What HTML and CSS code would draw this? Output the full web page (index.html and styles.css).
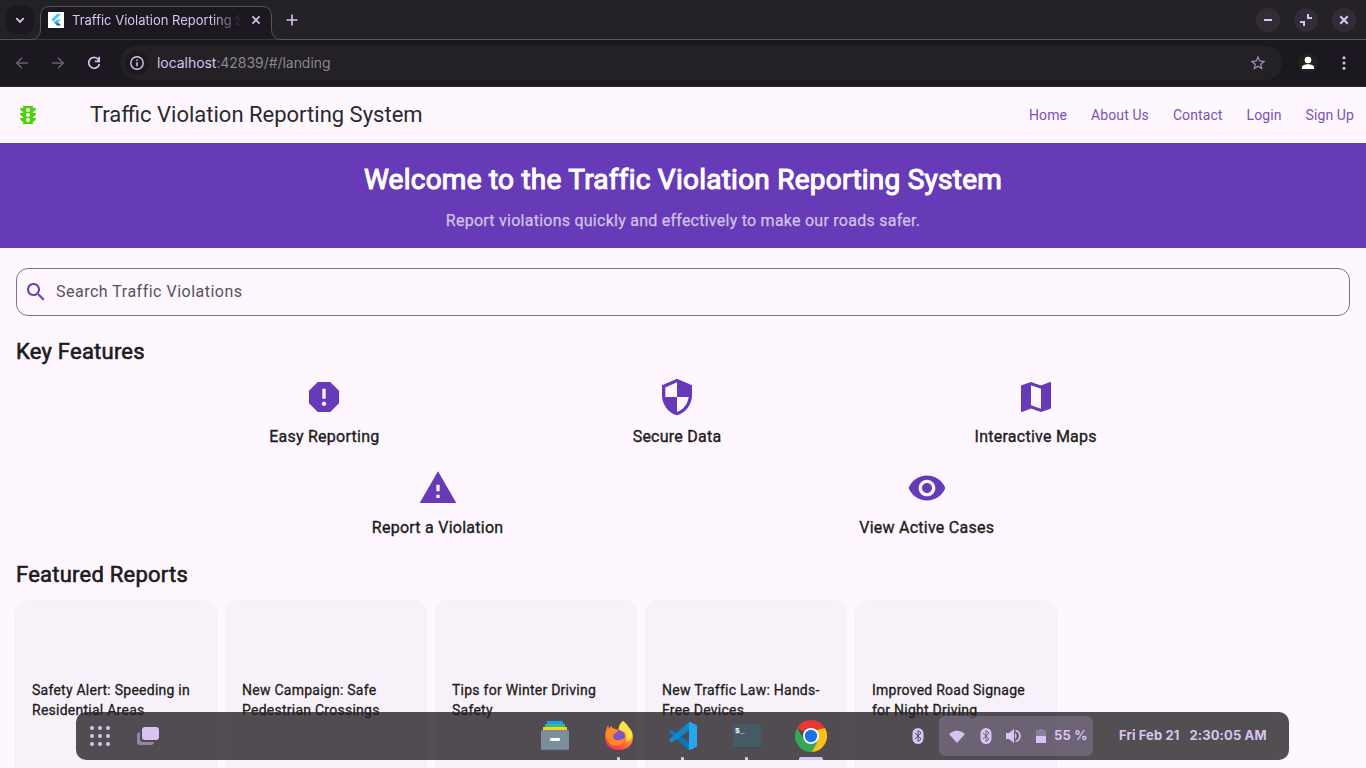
FILE: index.html
```html
<!DOCTYPE html>
<html lang="en">
<head>
<meta charset="utf-8">
<title>Traffic Violation Reporting System</title>
<link rel="stylesheet" href="styles.css">
</head>
<body>
<div class="screen">
  <header class="tabstrip">
    <button class="tab-search"><svg width="12" height="12" viewBox="0 0 12 12"><path d="M2.3 4.2 6 7.9l3.7-3.7" fill="none" stroke="currentColor" stroke-width="1.8"/></svg></button>
    <svg class="tab-outline" width="291" height="40" viewBox="0 0 291 40"><path d="M0 46V45Q.5 39.5 6.500 39.500H31Q40.500 39 40.500 29V16Q40.500 6.500 50 6.500H262Q271.500 6.500 271.500 16V29Q271.500 39.500 282 39.500H291V40H0Z" fill="#1b181f" stroke="#58545c"/></svg>
    <div class="tab">
      <svg class="favicon" width="16" height="16" viewBox="0 0 16 16"><path fill="#fff" d="M0 0h16v16H0z"/><path fill="#47c5fb" d="M9 2h4L5.300 9.700l-2-2z"/><path fill="#47c5fb" d="M9 7.400h4l-3 3-2-2z"/><path fill="#16569e" d="m8 12.300 2-1.900 3 3H9z"/><path fill="#15a5ed" d="m6 10.400 2-2 2 2-2 2z"/></svg>
      <span class="tab-title">Traffic Violation Reporting S</span>
      <svg class="tab-close" width="10" height="10" viewBox="0 0 10 10"><path d="m1.400 1.400 7.200 7.200m0-7.200L1.400 8.600" stroke="currentColor" stroke-width="1.600"/></svg>
    </div>
    <svg class="new-tab" width="12" height="12" viewBox="0 0 12 12"><path d="M6 .5v11M.5 6h11" stroke="currentColor" stroke-width="1.600"/></svg>
    <div class="window-buttons">
      <span class="win-btn"><svg width="24" height="24"><path d="M8 12h8" stroke="currentColor" stroke-width="2"/></svg></span>
      <span class="win-btn"><svg width="24" height="24"><path d="M14 6v4h4M6 14h4v4" fill="none" stroke="currentColor" stroke-width="2"/></svg></span>
      <span class="win-btn"><svg width="24" height="24"><path d="m8.300 8.300 7.400 7.400m0-7.400-7.400 7.400" stroke="currentColor" stroke-width="2.200"/></svg></span>
    </div>
  </header>
  <div class="toolbar">
    <svg class="nav-icon dim" width="16" height="16" viewBox="0 0 16 16"><path d="M14 8H3m5-5.300L2.700 8 8 13.300" fill="none" stroke="currentColor" stroke-width="1.500"/></svg>
    <svg class="nav-icon dim" width="16" height="16" viewBox="0 0 16 16"><path d="M2 8h11M8 2.700 13.300 8 8 13.300" fill="none" stroke="currentColor" stroke-width="1.500"/></svg>
    <svg class="nav-icon" width="16" height="16" viewBox="0 0 16 16"><path d="M12.900 5.300A5.400 5.400 0 1 0 13.400 9M13.200 1.800v4.500H8.800" fill="none" stroke="currentColor" stroke-width="1.700"/></svg>
    <div class="omnibox">
      <span class="site-info"><svg width="14" height="14" viewBox="0 0 14 14"><circle cx="7" cy="7" r="6.200" fill="none" stroke="currentColor" stroke-width="1.400"/><path d="M7 6.200v4M7 3.500v1.600" stroke="currentColor" stroke-width="1.500"/></svg></span>
      <span class="url"><b>localhost</b>:42839/#/landing</span>
      <svg class="star" width="18" height="18" viewBox="0 0 24 24"><path fill="currentColor" d="M22 9.240l-7.190-.62L12 2 9.190 8.630 2 9.240l5.460 4.730L5.820 21 12 17.270 18.180 21l-1.630-7.030L22 9.240zM12 15.400l-3.760 2.270 1-4.280-3.320-2.880 4.380-.38L12 6.100l1.710 4.040 4.380.38-3.320 2.880 1 4.280L12 15.400z"/></svg>
    </div>
    <span class="profile"><svg width="20" height="20"><circle cx="10" cy="7" r="3.300" fill="#fff"/><path d="M4 16v-1.500C4 12.500 7 11.300 10 11.300s6 1.200 6 3.200V16z" fill="#fff"/></svg></span>
    <svg class="kebab" width="4" height="14"><circle cx="2" cy="1.800" r="1.500"/><circle cx="2" cy="7" r="1.500"/><circle cx="2" cy="12.200" r="1.500"/></svg>
  </div>

  <main class="page">
    <div class="appbar">
      <svg class="logo" width="24" height="24" viewBox="0 0 24 24"><path fill="#4bd30b" fill-rule="evenodd" d="M20 10h-3V8.860c1.720-.45 3-2 3-3.860h-3V4c0-.55-.45-1-1-1H8c-.55 0-1 .45-1 1v1H4c0 1.860 1.280 3.410 3 3.860V10H4c0 1.860 1.280 3.410 3 3.860V15H4c0 1.860 1.280 3.410 3 3.860V20c0 .55.45 1 1 1h8c.55 0 1-.45 1-1v-1.140c1.720-.45 3-2 3-3.860h-3v-1.140c1.720-.45 3-2 3-3.860zm-8 9c-1.110 0-2-.9-2-2s.890-2 2-2c1.100 0 2 .9 2 2s-.89 2-2 2zm0-5c-1.110 0-2-.9-2-2s.890-2 2-2c1.100 0 2 .9 2 2s-.89 2-2 2zm0-5c-1.110 0-2-.9-2-2 0-1.110.890-2 2-2 1.100 0 2 .890 2 2 0 1.100-.89 2-2 2z"/></svg>
      <h1 class="app-title">Traffic Violation Reporting System</h1>
      <nav class="links"><a>Home</a><a>About Us</a><a>Contact</a><a>Login</a><a>Sign Up</a></nav>
    </div>
    <section class="hero">
      <h2 class="hero-title">Welcome to the Traffic Violation Reporting System</h2>
      <p class="hero-text">Report violations quickly and effectively to make our roads safer.</p>
    </section>
    <div class="content">
      <div class="search">
        <svg width="24" height="24" viewBox="0 0 24 24"><path fill="#673ab7" d="M15.500 14h-.79l-.28-.27C15.410 12.590 16 11.110 16 9.500 16 5.910 13.090 3 9.500 3S3 5.910 3 9.500 5.910 16 9.500 16c1.610 0 3.090-.59 4.230-1.570l.27.28v.79l5 4.990L20.490 19l-4.990-5zm-6 0C7.010 14 5 11.990 5 9.500S7.010 5 9.500 5 14 7.010 14 9.500 11.990 14 9.500 14z"/></svg>
        <span class="search-hint">Search Traffic Violations</span>
      </div>
      <h3 class="section-title">Key Features</h3>
      <div class="features">
        <div class="feature"><svg viewBox="0 0 24 24"><path d="M15.730 3H8.270L3 8.270v7.460L8.270 21h7.460L21 15.730V8.270L15.730 3zM12 17.300c-.72 0-1.300-.58-1.300-1.300s.58-1.300 1.300-1.300 1.300.58 1.300 1.300-.58 1.300-1.300 1.300zm1-4.300h-2V7h2v6z"/></svg><span>Easy Reporting</span></div>
        <div class="feature"><svg viewBox="0 0 24 24"><path d="M12 1 3 5v6c0 5.550 3.840 10.740 9 12 5.160-1.260 9-6.450 9-12V5l-9-4zm0 10.990h7c-.53 4.120-3.280 7.790-7 8.940V12H5V6.300l7-3.110v8.800z"/></svg><span>Secure Data</span></div>
        <div class="feature"><svg viewBox="0 0 24 24"><path d="m20.500 3-.16.030L15 5.100 9 3 3.360 4.900c-.21.070-.36.250-.36.480V20.500c0 .280.220.5.5.5l.16-.030L9 18.900l6 2.100 5.640-1.900c.21-.070.36-.250.36-.480V3.500c0-.280-.22-.5-.5-.5zM15 19l-6-2.110V5l6 2.110V19z"/></svg><span>Interactive Maps</span></div>
      </div>
      <div class="features">
        <div class="feature"><svg viewBox="0 0 24 24"><path d="M1 21h22L12 2 1 21zm12-3h-2v-2h2v2zm0-4h-2v-4h2v4z"/></svg><span>Report a Violation</span></div>
        <div class="feature"><svg viewBox="0 0 24 24"><path d="M12 4.500C7 4.500 2.730 7.610 1 12c1.730 4.390 6 7.500 11 7.500s9.270-3.110 11-7.500c-1.730-4.390-6-7.500-11-7.500zM12 17c-2.760 0-5-2.240-5-5s2.240-5 5-5 5 2.240 5 5-2.240 5-5 5zm0-8c-1.660 0-3 1.340-3 3s1.340 3 3 3 3-1.340 3-3-1.340-3-3-3z"/></svg><span>View Active Cases</span></div>
      </div>
      <h3 class="section-title reports-title">Featured Reports</h3>
      <div class="reports">
        <article class="report">Safety Alert: Speeding in<br>Residential Areas</article>
        <article class="report">New Campaign: Safe<br>Pedestrian Crossings</article>
        <article class="report">Tips for Winter Driving<br>Safety</article>
        <article class="report">New Traffic Law: Hands-<br>Free Devices</article>
        <article class="report">Improved Road Signage<br>for Night Driving</article>
      </div>
    </div>
  </main>

  <div class="dock">
    <div class="dock-left">
      <svg width="20" height="20"><g fill="#d9c3f2"><circle cx="2" cy="2" r="2"/><circle cx="10" cy="2" r="2"/><circle cx="18" cy="2" r="2"/><circle cx="2" cy="10" r="2"/><circle cx="10" cy="10" r="2"/><circle cx="18" cy="10" r="2"/><circle cx="2" cy="18" r="2"/><circle cx="10" cy="18" r="2"/><circle cx="18" cy="18" r="2"/></g></svg>
      <svg width="22" height="18"><path d="M3 5v7q0 3 3 3h11q-.5 3-3 3H3q-3 0-3-3V8q0-2.500 3-3z" fill="#94879f"/><rect x="5" width="17" height="13" rx="3" fill="#d9c3f2"/></svg>
    </div>
    <div class="apps">
      <div class="app"><svg width="32" height="32" viewBox="0 0 32 32"><path fill="#1c9cf0" d="M8 1h16v3H8z"/><path fill="#2ec27e" d="M6 4h20v3H6z"/><path fill="#ffcf20" d="M4 7h24v3H4z"/><rect x="2" y="10" width="28" height="20" rx="1.500" fill="#78909c"/><path d="M3 29.700h26" stroke="#607680" stroke-width=".6"/><rect x="11" y="18" width="10" height="3" rx="1" fill="#fff"/></svg></div>
      <div class="app"><svg width="32" height="32" viewBox="0 0 32 32"><defs><linearGradient id="fox" x1=".8" y1="0" x2=".2" y2="1"><stop offset="0" stop-color="#ffdf30"/><stop offset=".45" stop-color="#ff922b"/><stop offset=".85" stop-color="#ff3b50"/></linearGradient></defs><path fill="url(#fox)" d="M20 1c4 3 5 5 6 7 3 2 4 6 4 9 0 8-6 13-14 13S2 25 2 17c0-4 1-7 3-12l1 4 2-3c1 1 2 3 4 3l3 1c1-4 2-7 5-9z"/><circle cx="16" cy="16" r="6" fill="#8053c8"/><path fill="#ff8a20" d="M3 11c3-3 6-2 9-2 1 1 3 1 3 2-1 2-3 2-4 3-2 2-1 5 2 6 4 1 6-1 9-2-1 7-8 9-13 7-5-3-7-8-6-14z"/><path fill="#ffe046" d="M20 1c3 4 10 8 9 16-1 3-3 4-6 5 1-4 1-8-2-10-4-1-5-3-5-4 0-2 2-5 4-7z"/></svg><i class="dot"></i></div>
      <div class="app"><svg width="32" height="32" viewBox="0 0 32 32"><path fill="#0879c0" d="m2 11.500 2.500-2.300L24 24v6h-2L2 12.500z"/><path fill="#1287cc" d="M2 19.500 22 2h2v7L4.500 22.800 2 20.500z"/><path fill="#28a6ec" d="m23 2 7 3.200v21.600L23 30l-1-1V3z"/></svg><i class="dot"></i></div>
      <div class="app"><svg width="32" height="32" viewBox="0 0 32 32"><rect x="2" y="4" width="28" height="24" rx="1.500" fill="#455a64"/><path d="M3 28h26" stroke="#344750"/><text x="4" y="13" class="prompt">$_</text></svg><i class="dot"></i></div>
      <div class="app active"><svg width="32" height="32" viewBox="0 0 32 32"><path fill="#e53935" d="M16 16 2.140 8A16 16 0 0 1 29.860 8z"/><path fill="#34a853" d="M16 16v16A16 16 0 0 1 2.140 8l7 12z"/><path fill="#fbc116" d="M16 8h13.860A16 16 0 0 1 16 32l6.900-12z"/><path fill="#34a853" d="m9 20 7 4 6-1-5.200 9H16z"/><path fill="#e53935" d="M10 8h19.860L22 10z"/><circle cx="16" cy="16" r="8" fill="#fff"/><circle cx="16" cy="16" r="6.200" fill="#1a73e8"/></svg><i class="bar"></i></div>
    </div>
    <div class="status">
      <svg class="bt" width="12" height="16" viewBox="0 0 12 16"><rect x=".5" width="11" height="16" rx="5.500" fill="#d9c3f2"/><path d="m3 5 6 6-3 2.500v-11L9 5l-6 6" fill="none" stroke="#544f58"/></svg>
      <div class="quick">
        <svg class="wifi" width="16" height="13"><path d="M0 4Q8-3 16 4L8 13z" fill="#d9c3f2"/></svg>
        <svg class="bt" width="12" height="16" viewBox="0 0 12 16"><rect x=".5" width="11" height="16" rx="5.500" fill="#d9c3f2"/><path d="m3 5 6 6-3 2.500v-11L9 5l-6 6" fill="none" stroke="#6b6374"/></svg>
        <svg class="volume" width="16" height="16"><path d="M0 5h3l5-4v14l-5-4H0z" fill="#d9c3f2"/><path d="M9 5q3 3 0 6" fill="#d9c3f2"/><path d="M9.500 2.500Q14 4 14 8t-4.500 5.500" fill="none" stroke="#d9c3f2" stroke-width="1.600"/></svg>
        <svg class="battery" width="10" height="14"><path d="M0 1h3V0h4v1h3v6H0z" fill="#8d7d9e"/><path d="M0 7h10v7H0z" fill="#d9c3f2"/></svg>
        <span class="percent">55 %</span>
      </div>
      <div class="clock"><span>Fri Feb 21</span><span class="time">2:30:05 AM</span></div>
    </div>
  </div>
</div>
</body>
</html>
```
FILE: styles.css
```css
* { box-sizing: border-box; }
body { margin: 0; font-family: Roboto, "Noto Sans", sans-serif; }
svg { display: block; flex: none; }
h1, h2, h3, p { margin: 0; font-weight: 400; }

.screen { position: relative; width: 1366px; height: 768px; overflow: hidden; background: #fef7ff; }

.tabstrip { position: relative; display: flex; align-items: center; height: 40px; background: #232026; border-bottom: 1px solid #58545c; color: #d9c3f2; font-family: Inter, sans-serif; }
.tab-search { display: flex; align-items: center; justify-content: center; width: 28px; height: 28px; margin-left: 6px; padding: 0; border: 0; border-radius: 10px; background: #1b181f; color: inherit; position: relative; z-index: 1; }
.tab-outline { position: absolute; left: 0; top: 0; }
.tab { position: relative; display: flex; align-items: center; width: 232px; height: 34px; margin-left: 6px; padding: 0 11px 0 8px; }
.tab-title { flex: none; width: 170px; margin-left: 8px; white-space: nowrap; font-size: 13px; mask-image: linear-gradient(90deg, #000 140px, transparent 170px); }
.tab-close { margin-left: 9px; }
.new-tab { margin-left: 14px; }
.window-buttons { display: flex; gap: 14px; margin-left: auto; margin-right: 10px; }
.win-btn { width: 24px; height: 24px; border-radius: 50%; background: #322c39; }

.toolbar { display: flex; align-items: center; height: 47px; padding: 0 20px 0 14px; background: #1b181f; color: #d9c3f2; font-family: Inter, sans-serif; border-bottom: 1px solid #2b282e; }
.nav-icon { margin-right: 20px; }
.dim { color: #6b5f77; }
.omnibox { display: flex; align-items: center; width: 1162px; height: 34px; margin-left: -2px; padding: 0 15px 0 5px; border-radius: 17px; background: #232026; }
.site-info { display: flex; align-items: center; justify-content: center; width: 24px; height: 24px; border-radius: 50%; background: #1b181f; }
.url { margin-left: 8px; padding-bottom: 2px; font-size: 14px; letter-spacing: -.05px; color: #8c8691; }
.url b { font-weight: 400; color: #d9c3f2; }
.star { margin-left: auto; color: #a392b5; }
.profile { width: 20px; height: 20px; margin-left: 16px; border-radius: 50%; background: #202420; }
.kebab { margin-left: auto; fill: #d9c3f2; }

.appbar { display: flex; align-items: center; height: 56px; padding: 0 12px 0 16px; color: #2b292e; }
.app-title { margin-left: 50px; font-size: 22px; line-height: 28px; }
.links { display: flex; gap: 24px; margin-left: auto; font-size: 14px; letter-spacing: .1px; color: #7a51c0; }

.hero { height: 105px; padding-top: 19px; text-align: center; background: #673ab7; color: #fff; }
.hero-title { font-size: 28px; line-height: 36px; letter-spacing: .24px; -webkit-text-stroke: 1.1px; }
.hero-text { margin-top: 11px; font-size: 16px; line-height: 24px; letter-spacing: .25px; color: #d1c4e9; -webkit-text-stroke: .25px; }

.content { padding: 20px 16px 0; color: #1d1b20; }
.search { display: flex; align-items: center; gap: 8px; height: 48px; padding: 0 7px; border: 1px solid #79747e; border-radius: 12px; font-size: 16px; letter-spacing: .5px; color: #56525c; }
.search-hint { padding-bottom: 2px; }
.section-title { margin-top: 22px; font-size: 22px; line-height: 28px; letter-spacing: .23px; -webkit-text-stroke: .6px; }
.features { display: flex; justify-content: space-evenly; height: 91px; padding-top: 11px; }
.feature { display: flex; flex-direction: column; align-items: center; gap: 8px; font-size: 16px; line-height: 24px; letter-spacing: .25px; -webkit-text-stroke: .35px; }
.feature svg { width: 40px; height: 40px; fill: #673ab7; stroke: none; }
.reports-title { margin-top: 13px; }
.reports { display: flex; gap: 10px; margin-top: 12px; }
.report { flex: none; width: 200px; height: 220px; padding: 79px 0 0 16px; border-radius: 12px; background: #f7f1f9; box-shadow: 0 0 0 1px #f5eff6; font-size: 14px; line-height: 20px; letter-spacing: .25px; -webkit-text-stroke: .3px; }

.dock { position: absolute; left: 76px; top: 712px; display: flex; width: 1213px; height: 48px; border-radius: 10px; background: rgba(35, 32, 35, .79); color: #d9c3f2; font-family: Inter, sans-serif; font-size: 13px; font-weight: 700; }
.dock-left { display: flex; align-items: center; gap: 27px; width: 463px; padding-left: 14px; }
.apps { display: flex; gap: 32px; }
.app { display: flex; flex-direction: column; align-items: center; justify-content: space-between; width: 32px; padding-top: 8px; }
.dot { width: 3px; height: 3px; margin-right: 1px; border-radius: 1px 1px 0 0; background: #d9c3f2; }
.bar { width: 24px; height: 3px; border-radius: 2px 2px 0 0; background: #d9c3f2; }
.prompt { font: 700 8px "Liberation Mono", monospace; fill: #fff; }
.status { display: flex; flex: 1; align-items: center; padding-left: 85px; }
.quick { display: flex; align-items: center; width: 154px; height: 40px; margin-left: 15px; padding-left: 10px; border-radius: 6px; background: rgba(148, 133, 168, .4); }
.quick .bt { margin-left: 15px; }
.volume { margin-left: 14px; }
.battery { margin-left: 14px; }
.percent { margin-left: 8px; padding-bottom: 2px; white-space: nowrap; letter-spacing: .2px; }
.clock { display: flex; gap: 10px; margin-left: 26px; padding-bottom: 2px; white-space: nowrap; letter-spacing: .1px; }
.time { letter-spacing: .12px; }
```
